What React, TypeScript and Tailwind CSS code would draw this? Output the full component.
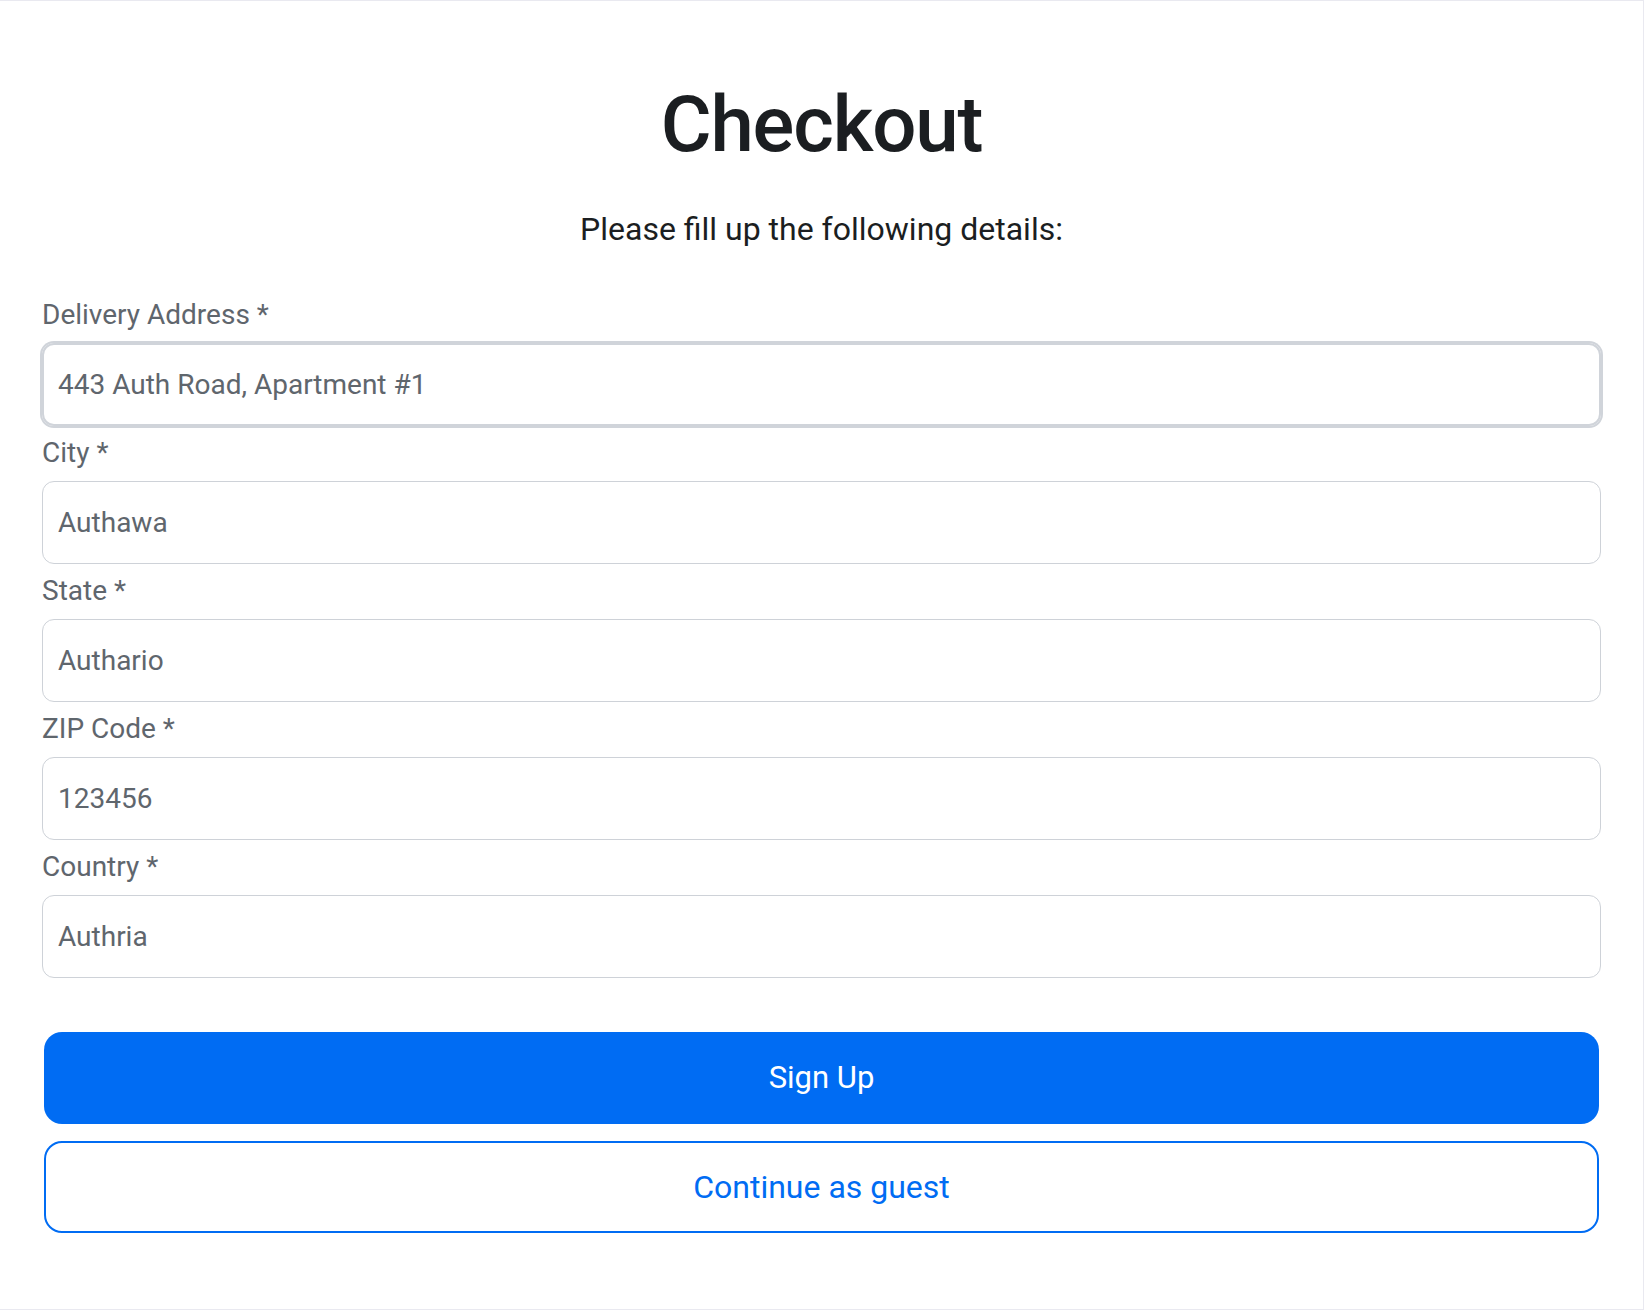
import React from 'react';

const fields = [
  { id: 'address', label: 'Delivery Address *', value: '443 Auth Road, Apartment #1', focused: true },
  { id: 'city', label: 'City *', value: 'Authawa' },
  { id: 'state', label: 'State *', value: 'Authario' },
  { id: 'zip', label: 'ZIP Code *', value: '123456' },
  { id: 'country', label: 'Country *', value: 'Authria' },
];

export default function App() {
  return (
    <div className="h-[1310px] w-full bg-white border-t border-r border-b border-[#e9e9f0] font-['Roboto',sans-serif] px-[42px] pt-[77px]">
      <h1 className="text-center text-[78px] leading-[94px] font-medium tracking-[-0.015em] text-[#1b1e21]">Checkout</h1>
      <p className="mt-[34px] text-center text-[32px] leading-[46px] text-[#1b1e21]">Please fill up the following details:</p>

      <form className="mt-[42px] flex flex-col gap-[6px]" onSubmit={(e) => e.preventDefault()}>
        {fields.map((f) => (
          <div key={f.id} className="flex flex-col">
            <label htmlFor={f.id} className="text-[28px] leading-[42px] text-[#5f666d] mb-[7px]">
              {f.label}
            </label>
            <input
              id={f.id}
              defaultValue={f.value}
              autoFocus={f.focused}
              className={
                f.focused
                  ? 'h-[83px] w-full rounded-[12px] border-2 border-[#d0d4da] ring-2 ring-[#d0d4da] px-[14px] text-[28px] text-[#5f666d] caret-[#5f666d] outline-none'
                  : 'h-[83px] w-full rounded-[12px] border border-[#ced2d8] px-[15px] text-[28px] text-[#5f666d] outline-none'
              }
            />
          </div>
        ))}

        <div className="mt-[48px] mx-[2px] flex flex-col gap-[17px]">
          <button type="submit" className="h-[92px] w-full rounded-[18px] bg-[#006cf3] text-[31px] text-white">
            Sign Up
          </button>
          <button type="button" className="h-[92px] w-full rounded-[18px] border-2 border-[#006cf3] bg-white text-[32px] text-[#006cf3]">
            Continue as guest
          </button>
        </div>
      </form>
    </div>
  );
}
